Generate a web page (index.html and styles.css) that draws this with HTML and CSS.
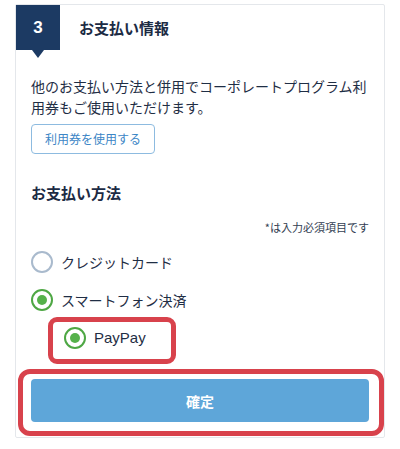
FILE: index.html
```html
<!DOCTYPE html>
<html lang="ja">
<head>
<meta charset="utf-8">
<link rel="stylesheet" href="styles.css">
</head>
<body>
<section class="card">
  <header class="card-head">
    <div class="step">3</div>
    <h2 class="title">お支払い情報</h2>
  </header>
  <div class="card-body">
    <p class="lead">他のお支払い方法と併用でコーポレートプログラム利用券もご使用いただけます。</p>
    <button class="ticket-btn" type="button">利用券を使用する</button>
    <h3 class="sub">お支払い方法</h3>
    <p class="note">*は入力必須項目です</p>
    <div class="option">
      <span class="radio"></span>
      <span class="label">クレジットカード</span>
    </div>
    <div class="option">
      <span class="radio on"></span>
      <span class="label">スマートフォン決済</span>
    </div>
    <div class="option sub-option">
      <span class="radio on"></span>
      <span class="label latin">PayPay</span>
      <span class="mark mark-pay"></span>
    </div>
    <div class="confirm-wrap">
      <button class="confirm" type="button">確定</button>
      <span class="mark mark-confirm"></span>
    </div>
  </div>
</section>
</body>
</html>
```

FILE: styles.css
```css
* { box-sizing: border-box; }
html, body { margin: 0; padding: 0; background: #fff; }
body {
  font-family: "Noto Sans CJK JP", "Noto Sans", sans-serif;
  color: #1f2e45;
}
.card {
  margin: 4px 0 0 15px;
  width: 370px;
  border: 1px solid #e4e7eb;
  border-radius: 2px;
  background: #fff;
}
.card-head {
  display: flex;
  align-items: center;
  height: 45px;
}
.step {
  position: relative;
  width: 44px;
  height: 45px;
  background: #1c3a63;
  color: #fff;
  font-family: "Liberation Sans", "Noto Sans CJK JP", sans-serif;
  font-weight: 700;
  font-size: 17px;
  display: flex;
  align-items: center;
  justify-content: center;
}
.step::after {
  content: "";
  position: absolute;
  left: 16px;
  top: 45px;
  border-left: 6px solid transparent;
  border-right: 6px solid transparent;
  border-top: 8px solid #1c3a63;
}
.title {
  margin: 0 0 0 19px;
  font-size: 15px;
  font-weight: 700;
  line-height: 21px;
  color: #1c2b44;
}
.card-body {
  padding: 0 15px 15px 15px;
}
.lead {
  margin: 26px 0 0 0;
  font-size: 14px;
  line-height: 21px;
}
.ticket-btn {
  display: block;
  margin-top: 6px;
  height: 30px;
  padding: 0 13px;
  background: #fff;
  border: 1px solid #8dbbe0;
  border-radius: 4px;
  color: #3c86c6;
  font-family: inherit;
  font-size: 12px;
  line-height: 28px;
}
.sub {
  margin: 28px 0 0 0;
  font-size: 15px;
  font-weight: 700;
  line-height: 21px;
  color: #1c2b44;
}
.note {
  margin: 16px 0 0 0;
  text-align: right;
  font-size: 11px;
  line-height: 16px;
  color: #333e52;
}
.option {
  display: flex;
  align-items: center;
  gap: 8px;
  height: 22px;
  margin-top: 16px;
}
.radio {
  flex: none;
  width: 22px;
  height: 22px;
  border: 2px solid #a9bacd;
  border-radius: 50%;
  display: flex;
  align-items: center;
  justify-content: center;
}
.radio.on { border-color: #4ea744; }
.radio.on::after {
  content: "";
  width: 10px;
  height: 10px;
  border-radius: 50%;
  background: #55b14a;
}
.label {
  font-size: 14px;
  line-height: 22px;
}
.latin {
  font-family: "Liberation Sans", "Noto Sans CJK JP", sans-serif;
  font-size: 15px;
}
.sub-option {
  position: relative;
  margin-left: 33px;
  width: 90px;
}
.mark {
  position: absolute;
  border: 5px solid #d8424c;
  pointer-events: none;
}
.mark-pay {
  left: -16px;
  top: -10px;
  width: 128px;
  height: 47px;
  border-radius: 9px;
}
.confirm-wrap {
  position: relative;
  margin-top: 30px;
}
.confirm {
  display: block;
  width: 100%;
  height: 43px;
  border: 0;
  border-radius: 4px;
  background: #5ea6d9;
  color: #fff;
  font-family: inherit;
  font-size: 14px;
  font-weight: 700;
}
.mark-confirm {
  left: -13px;
  top: -10px;
  right: -15px;
  bottom: -14px;
  border-radius: 12px;
}
```
